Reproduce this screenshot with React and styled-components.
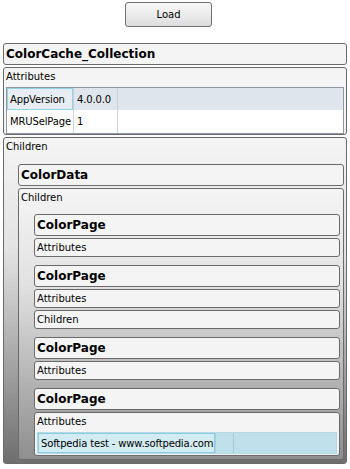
import React from 'react';
import styled, { createGlobalStyle } from 'styled-components';

const Global = createGlobalStyle`
  html, body { margin: 0; padding: 0; background: #ffffff; }
  body { font-family: "DejaVu Sans", Verdana, sans-serif; font-size: 10px; color: #000; }
  * { box-sizing: border-box; }
`;

const Page = styled.div`
  width: 350px;
  height: 469px;
  padding: 2px 3px 0 3px;
  display: flex;
  flex-direction: column;
  overflow: hidden;
`;

const Toolbar = styled.div`
  display: flex;
  padding-left: 122px;
  margin-bottom: 16px;
`;

const LoadButton = styled.button`
  width: 87px;
  height: 25px;
  padding: 0;
  border: 1px solid #707070;
  border-radius: 3px;
  background: linear-gradient(#f7f7f7 0%, #ececec 50%, #dcdcdc 100%);
  font: 10px "DejaVu Sans", Verdana, sans-serif;
  color: #000;
`;

const Node = styled.div`
  display: flex;
  flex-direction: column;
  gap: 2px;
`;

const NodeHeader = styled.div`
  height: 22px;
  display: flex;
  align-items: center;
  padding-left: 2px;
  border: 1px solid #6a6a6a;
  border-radius: 3px;
  background: #f4f4f4;
  font: bold 12px "DejaVu Sans", Verdana, sans-serif;
`;

const Section = styled.div`
  display: flex;
  flex-direction: column;
  border: 1px solid #6a6a6a;
  border-radius: 3px;
  background: ${p => p.$fade ? `linear-gradient(#f4f4f4 0%, #e2e2e2 35%, ${p.$fade} 100%)` : '#f4f4f4'};
`;

const SectionLabel = styled.div`
  height: 17px;
  line-height: 17px;
  padding-left: 2px;
  font-size: 10px;
`;

const SectionBody = styled.div`
  display: flex;
  flex-direction: column;
  gap: ${p => p.$gap || 0}px;
  padding: ${p => p.$pad};
`;

const Grid = styled.div`
  display: grid;
  grid-template-columns: ${p => p.$cols};
  border: 1px solid ${p => p.$frame || '#8c98a4'};
  background: #fff;
`;

const Cell = styled.div`
  height: ${p => p.$h || 22}px;
  display: flex;
  align-items: center;
  padding-left: 3px;
  white-space: nowrap;
  letter-spacing: -0.15px;
  font-size: 10px;
  background: ${p => p.$bg || '#fff'};
  border-right: 1px solid ${p => p.$line || '#d4d4d4'};
  ${p => p.$selected ? `box-shadow: inset 0 0 0 1px ${p.$selected};` : ''}
`;

const Filler = styled(Cell)`
  border-right: none;
`;

const Group = styled.div`
  display: flex;
  flex-direction: column;
  gap: 8px;
`;

function Attributes({ children, pad }) {
  return (
    <Section>
      <SectionLabel>Attributes</SectionLabel>
      {children && <SectionBody $pad={pad}>{children}</SectionBody>}
    </Section>
  );
}

function ChildrenBox({ fade, pad, gap, children }) {
  return (
    <Section $fade={fade}>
      <SectionLabel>Children</SectionLabel>
      <SectionBody $pad={pad} $gap={gap}>{children}</SectionBody>
    </Section>
  );
}

const rowBlue = '#dfe5ec';

export default function App() {
  return (
    <>
      <Global />
      <Page>
        <Toolbar>
          <LoadButton>Load</LoadButton>
        </Toolbar>
        <Node>
          <NodeHeader>ColorCache_Collection</NodeHeader>
          <Attributes pad="2px 2px 0 2px">
            <Grid $cols="67px 44px 1fr">
              <Cell $bg="#e7edf2" $selected="#8fd3e4" $line="#c9d0d6">AppVersion</Cell>
              <Cell $bg={rowBlue} $line="#c9d0d6">4.0.0.0</Cell>
              <Filler $bg={rowBlue} />
              <Cell $h={23}>MRUSelPage</Cell>
              <Cell $h={23}>1</Cell>
              <Filler $h={23} />
            </Grid>
          </Attributes>
          <ChildrenBox fade="#6e6e6e" pad="9px 2px 3px 14px">
            <Node>
              <NodeHeader>ColorData</NodeHeader>
              <ChildrenBox fade="#8e8e8e" pad="8px 3px 3px 15px">
                <Group>
                  <Node>
                    <NodeHeader>ColorPage</NodeHeader>
                    <Attributes />
                  </Node>
                  <Node>
                    <NodeHeader>ColorPage</NodeHeader>
                    <Attributes />
                    <Section>
                      <SectionLabel>Children</SectionLabel>
                    </Section>
                  </Node>
                  <Node>
                    <NodeHeader>ColorPage</NodeHeader>
                    <Attributes />
                  </Node>
                  <Node>
                    <NodeHeader>ColorPage</NodeHeader>
                    <Attributes pad="2px 2px 1px 2px">
                      <Grid $cols="178px 18px 1fr" $frame="#b4d8e3">
                        <Cell $h={20} $bg="#d3ecf3" $selected="#86cfe2" $line="#a9cfdb">Softpedia test - www.softpedia.com</Cell>
                        <Cell $h={20} $bg="#bde0ea" $line="#a9c6cf" />
                        <Filler $h={20} $bg="#bde0ea" />
                      </Grid>
                    </Attributes>
                  </Node>
                </Group>
              </ChildrenBox>
            </Node>
          </ChildrenBox>
        </Node>
      </Page>
    </>
  );
}
